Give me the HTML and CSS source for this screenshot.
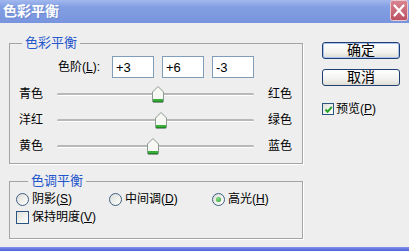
FILE: index.html
```html
<!DOCTYPE html>
<html lang="zh-CN">
<head>
    <meta charset="UTF-8">
    <title>色彩平衡</title>
    <link rel="stylesheet" href="styles.css">
</head>
<body>
<div class="dialog">
    <div class="title-bar">
        <span class="title-text">色彩平衡</span>
        <span class="close-btn">
            <svg width="18" height="21" viewBox="0 0 18 21">
                <defs>
                    <linearGradient id="closeFill" x1="0" y1="0" x2="0" y2="1">
                        <stop offset="0" stop-color="#d98592"/>
                        <stop offset="1" stop-color="#b9505f"/>
                    </linearGradient>
                </defs>
                <rect x="0.5" y="0.5" width="17" height="20" rx="2" fill="url(#closeFill)" stroke="#ecc8ce"/>
                <path d="M4.5 5.5 L13.5 15.5 M13.5 5.5 L4.5 15.5" stroke="#fff" stroke-width="2.2" stroke-linecap="round"/>
            </svg>
        </span>
    </div>

    <div class="dialog-body">
        <div class="left-col">
            <fieldset class="group group-balance">
                <legend>色彩平衡</legend>
                <div class="level-row">
                    <span class="level-label">色阶(<u>L</u>):</span>
                    <input class="level-input" type="text" value="+3">
                    <input class="level-input" type="text" value="+6">
                    <input class="level-input" type="text" value="-3">
                </div>
                <div class="slider-row first">
                    <span class="slider-label">青色</span>
                    <div class="track">
                        <span class="thumb" style="left: 51.5%"><svg width="12" height="17" viewBox="0 0 12 17"><path d="M0.5 6 L6 0.5 L11.5 6 L11.5 15 Q11.5 16.5 10 16.5 L2 16.5 Q0.5 16.5 0.5 15 Z" fill="#f7f7f4" stroke="#8c9a94"/><rect x="1" y="13" width="10" height="3" fill="#3aae3a"/><rect x="1" y="15" width="10" height="1" fill="#1f8a1f"/></svg></span>
                    </div>
                    <span class="slider-label">红色</span>
                </div>
                <div class="slider-row">
                    <span class="slider-label">洋红</span>
                    <div class="track">
                        <span class="thumb" style="left: 53%"><svg width="12" height="17" viewBox="0 0 12 17"><path d="M0.5 6 L6 0.5 L11.5 6 L11.5 15 Q11.5 16.5 10 16.5 L2 16.5 Q0.5 16.5 0.5 15 Z" fill="#f7f7f4" stroke="#8c9a94"/><rect x="1" y="13" width="10" height="3" fill="#3aae3a"/><rect x="1" y="15" width="10" height="1" fill="#1f8a1f"/></svg></span>
                    </div>
                    <span class="slider-label">绿色</span>
                </div>
                <div class="slider-row">
                    <span class="slider-label">黄色</span>
                    <div class="track">
                        <span class="thumb" style="left: 48.5%"><svg width="12" height="17" viewBox="0 0 12 17"><path d="M0.5 6 L6 0.5 L11.5 6 L11.5 15 Q11.5 16.5 10 16.5 L2 16.5 Q0.5 16.5 0.5 15 Z" fill="#f7f7f4" stroke="#8c9a94"/><rect x="1" y="13" width="10" height="3" fill="#3aae3a"/><rect x="1" y="15" width="10" height="1" fill="#1f8a1f"/></svg></span>
                    </div>
                    <span class="slider-label">蓝色</span>
                </div>
            </fieldset>

            <fieldset class="group group-tone">
                <legend>色调平衡</legend>
                <div class="tone-row">
                    <span class="option"><span class="radio"></span>阴影(<u>S</u>)</span>
                    <span class="option"><span class="radio"></span>中间调(<u>D</u>)</span>
                    <span class="option"><span class="radio checked"></span>高光(<u>H</u>)</span>
                </div>
                <div class="check-row">
                    <span class="option"><span class="checkbox"></span>保持明度(<u>V</u>)</span>
                </div>
            </fieldset>
        </div>

        <div class="right-col">
            <button class="btn btn-default">确定</button>
            <button class="btn">取消</button>
            <div class="preview">
                <span class="option">
                    <span class="checkbox small">
                        <svg width="9" height="9" viewBox="0 0 9 9"><path d="M1.5 4.5 L3.6 6.8 L7.8 1.8" fill="none" stroke="#22a322" stroke-width="2"/></svg>
                    </span>预览(<u>P</u>)
                </span>
            </div>
        </div>
    </div>

    <div class="frame-bottom"></div>
</div>
</body>
</html>
```

FILE: styles.css
```css
* {
    box-sizing: border-box;
}
body {
    margin: 0;
    width: 409px;
    height: 251px;
    overflow: hidden;
    font-family: "Liberation Sans", "Noto Sans CJK SC", sans-serif;
    font-size: 12px;
    color: #000;
    background: #eeeeee;
}
.dialog {
    display: flex;
    flex-direction: column;
    height: 251px;
}

/* title bar */
.title-bar {
    height: 23px;
    flex: none;
    display: flex;
    justify-content: space-between;
    padding: 0 1px 0 3px;
    background: linear-gradient(to bottom, #a2b8ee 0%, #839fe3 30%, #7794de 100%);
}
.title-text {
    color: #fff;
    font-size: 14px;
    font-weight: bold;
    line-height: 22px;
    text-shadow: 1px 1px 0 #6c88d0;
}
.close-btn {
    display: block;
    width: 18px;
    height: 21px;
}
.close-btn svg {
    display: block;
}

/* body */
.dialog-body {
    flex: 1;
    display: flex;
    padding: 13px 0 0 9px;
}
.left-col {
    width: 294px;
}
.group {
    margin: 0;
    padding: 0;
    min-width: 0;
    border: 1px solid #a4a4a4;
    box-shadow: 1px 1px 0 #fff;
}
.group legend {
    margin-left: 12px;
    padding: 0 3px;
    color: #2456cc;
    font-size: 13px;
    line-height: 14px;
}
.group-balance {
    padding-bottom: 4px;
}
.group-tone {
    margin-top: 10px;
    padding: 2px 0 12px 6px;
}

/* level inputs */
.level-row {
    display: flex;
    align-items: center;
    height: 22px;
    margin-top: 6px;
    padding-left: 48px;
}
.level-label {
    width: 54px;
    line-height: 14px;
}
.level-input {
    width: 42px;
    height: 22px;
    margin: 0 8px 0 0;
    padding: 0 3px;
    border: 1px solid #7f9db9;
    background: #fff;
    font-family: "Liberation Sans", sans-serif;
    font-size: 13px;
    color: #000;
    outline: none;
}

/* sliders */
.slider-row {
    display: flex;
    align-items: center;
    height: 26px;
    padding-left: 9px;
}
.slider-row.first {
    margin-top: 3px;
}
.slider-label {
    width: 38px;
    flex: none;
    line-height: 14px;
}
.track {
    position: relative;
    flex: none;
    width: 197px;
    height: 3px;
    margin-right: 14px;
    border-radius: 2px;
    background: #b8b8b8;
    border-bottom: 1px solid #fff;
}
.thumb {
    position: absolute;
    top: -7px;
    transform: translateX(-50%);
    width: 12px;
    height: 17px;
}
.thumb svg {
    display: block;
}

/* radios and checkboxes */
.tone-row {
    display: grid;
    grid-template-columns: 93px 103px auto;
    align-items: center;
    height: 18px;
}
.check-row {
    display: flex;
    align-items: center;
    height: 18px;
}
.option {
    display: flex;
    align-items: center;
    line-height: 14px;
    white-space: nowrap;
}
.radio {
    display: flex;
    align-items: center;
    justify-content: center;
    width: 13px;
    height: 13px;
    margin-right: 3px;
    border: 1px solid #3d5f82;
    border-radius: 50%;
    background: linear-gradient(135deg, #dcdcd6, #fff);
}
.radio.checked::after {
    content: "";
    width: 5px;
    height: 5px;
    border-radius: 50%;
    background: radial-gradient(circle at 40% 35%, #8ee08e, #1f9a1f);
}
.checkbox {
    display: flex;
    align-items: center;
    justify-content: center;
    width: 13px;
    height: 13px;
    margin-right: 3px;
    border: 1px solid #2a5580;
    background: linear-gradient(135deg, #e0e0da, #fff);
}
.checkbox.small {
    width: 12px;
    height: 12px;
    margin-right: 2px;
}
.checkbox svg {
    display: block;
}

/* buttons */
.right-col {
    display: flex;
    flex-direction: column;
    width: 78px;
    margin-left: 19px;
    padding-top: 6px;
}
.btn {
    width: 78px;
    height: 17px;
    margin: 0 0 10px 0;
    padding: 0;
    border: 1px solid #1f3f72;
    border-radius: 3px;
    background: linear-gradient(to bottom, #ffffff 0%, #f2f2ef 60%, #dedcd4 100%);
    font-family: "Liberation Sans", "Noto Sans CJK SC", sans-serif;
    font-size: 14px;
    line-height: 15px;
    color: #000;
}
.btn-default {
    box-shadow: inset 0 0 0 1px #a9c3ee;
}
.preview {
    margin-top: 6px;
}

.frame-bottom {
    height: 4px;
    flex: none;
    background: linear-gradient(to bottom, #7f90ee, #4d61d2);
}
```
